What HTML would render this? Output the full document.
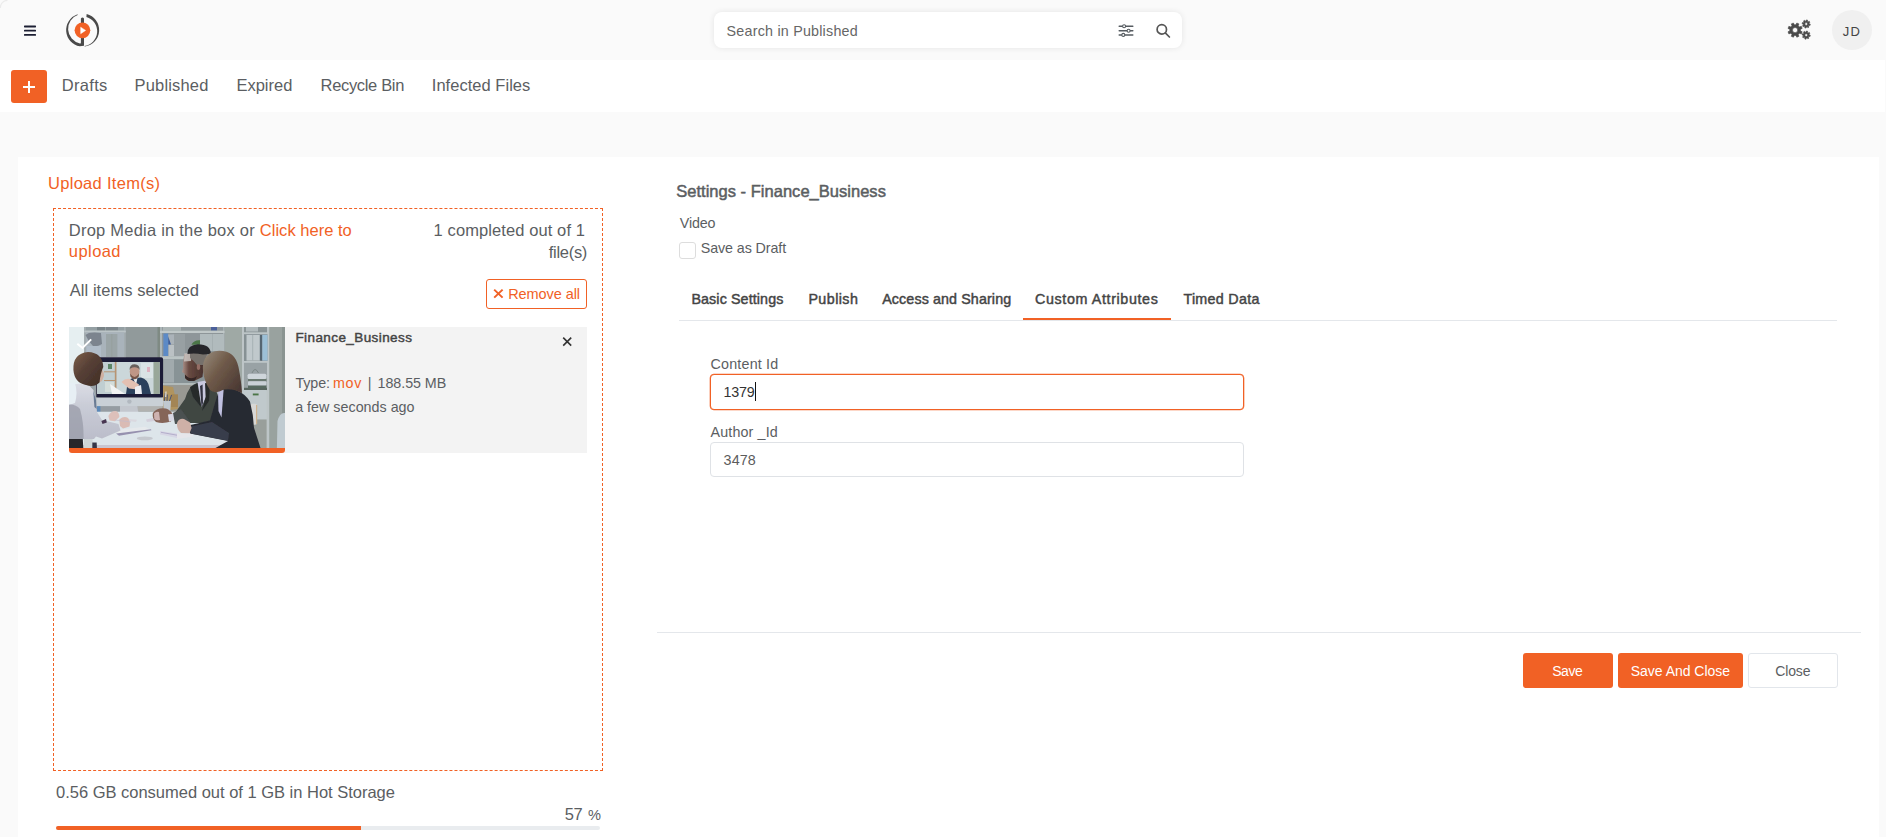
<!DOCTYPE html>
<html lang="en">
<head>
<meta charset="utf-8">
<title>Upload Item(s)</title>
<style>
*{box-sizing:border-box;margin:0;padding:0}
html,body{width:1886px;height:837px;overflow:hidden;background:#fafafa;font-family:"Liberation Sans",sans-serif;color:#555}
.abs{position:absolute;white-space:nowrap}
#nav{position:absolute;left:0;top:60px;width:1885px;height:52px;background:#fff}
#panel{position:absolute;left:18px;top:157px;width:1861px;height:700px;background:#fff}
.t{position:absolute;white-space:nowrap;line-height:1}
.o{color:#f16125}
.tb{font-size:14.5px;font-weight:bold;color:#444}
</style>
</head>
<body>
<div id="nav"></div>
<div id="panel"></div>

<!-- header -->
<svg class="abs" style="left:0;top:0" width="10" height="10" viewBox="0 0 10 10"><path d="M0.3 8 A7.5 7.5 0 0 1 7.5 0.3" fill="none" stroke="#000" stroke-opacity=".06" stroke-width="1.2"/></svg>
<svg class="abs" style="left:24px;top:25px" width="12" height="12" viewBox="0 0 12 12"><g fill="#1c1f33"><rect x="0" y="0.6" width="12" height="1.8" rx=".6"/><rect x="0" y="4.8" width="12" height="1.8" rx=".6"/><rect x="0" y="9" width="12" height="1.8" rx=".6"/></g></svg>

<svg id="logo" class="abs" style="left:62px;top:10px" width="42" height="42" viewBox="0 0 42 42">
<path d="M15.01 4.60 A16.5 16.5 0 0 0 17.78 36.35 L22 35.8 L22 8.4 Q20.45 6.6 18.9 8.4 L18.9 32.6 Q18.9 33.9 17.90 33.47 A14.9 14.9 0 0 1 16.15 4.81 Z" fill="#4a4a4a"/>
<path d="M24.64 4.09 A16.5 16.5 0 0 1 22.95 36.44 L22.37 36.05 A14.9 14.9 0 0 0 24.41 6.98 Z" fill="#4a4a4a"/>
<circle cx="20.45" cy="20.35" r="7.85" fill="#f16125"/>
<path d="M18.7 17.2 L23.6 20.4 L18.7 23.7 Z" fill="#fff" stroke="#fff" stroke-width=".5" stroke-linejoin="round"/>
</svg>

<div class="abs" id="searchbox" style="left:714px;top:12px;width:468px;height:36px;background:#fff;border-radius:8px;box-shadow:0 0 6px rgba(0,0,0,.09)"></div>

<div class="abs" id="avatar" style="left:1832px;top:10px;width:40px;height:40px;border-radius:50%;background:#f0f0f0"></div>

<!-- nav -->
<div class="abs" style="left:11px;top:70px;width:36px;height:33px;background:#f16125;border-radius:3px"></div>
<div class="abs" style="left:23px;top:86px;width:12px;height:2px;background:#fff"></div>
<div class="abs" style="left:28px;top:81px;width:2px;height:12px;background:#fff"></div>

<!-- left panel -->
<div class="abs" id="drop" style="left:53px;top:208px;width:550px;height:563px;border:1px dashed #f16125"></div>
<div class="abs" style="left:486px;top:279px;width:101px;height:30px;border:1px solid #f16125;border-radius:3px"></div>

<div class="abs" style="left:69px;top:327px;width:518px;height:126px;background:#f3f3f3"></div>
<svg class="abs" id="thumb" style="left:69px;top:327px" width="216" height="121" viewBox="0 0 216 121">
<defs>
<filter id="bl" x="-5%" y="-5%" width="110%" height="110%"><feGaussianBlur stdDeviation="0.7"/><feComponentTransfer><feFuncR type="gamma" exponent=".88"/><feFuncG type="gamma" exponent=".88"/><feFuncB type="gamma" exponent=".88"/></feComponentTransfer></filter>
<linearGradient id="hair1" x1="0" x2="1" y1="0" y2="1"><stop offset="0" stop-color="#72543f"/><stop offset=".45" stop-color="#4a342b"/><stop offset="1" stop-color="#33231c"/></linearGradient>
<linearGradient id="hair2" x1="0" x2="1" y1="0" y2=".8"><stop offset="0" stop-color="#8f8272"/><stop offset=".45" stop-color="#65503f"/><stop offset="1" stop-color="#3f2e29"/></linearGradient>
<linearGradient id="face2" x1="0" x2="1" y1="0" y2="0"><stop offset="0" stop-color="#a88a82"/><stop offset=".3" stop-color="#5c3e36"/><stop offset="1" stop-color="#3a2622"/></linearGradient>
<linearGradient id="blouse" x1="0" x2="0" y1="0" y2="1"><stop offset="0" stop-color="#d6d8e1"/><stop offset=".4" stop-color="#c3c6d2"/><stop offset="1" stop-color="#b4b6c4"/></linearGradient>
<clipPath id="tc"><rect width="216" height="121"/></clipPath>
</defs>
<g clip-path="url(#tc)"><g filter="url(#bl)">
<rect x="-3" y="-3" width="222" height="127" fill="#869091"/>
<!-- left strip -->
<rect x="-3" y="-3" width="18.3" height="127" fill="#e3edf0"/>
<!-- shelf unit 1 -->
<rect x="15.3" y="-3" width="41.5" height="95" fill="#9aa4a8"/>
<rect x="17" y="-3" width="38" height="6.5" fill="#8a959a"/>
<rect x="28" y="-3" width="8" height="6.5" fill="#6d787d"/><rect x="37" y="-3" width="12" height="6.5" fill="#717c80"/>
<rect x="15.3" y="3.6" width="41.5" height="1.8" fill="#b4bdc1"/>
<rect x="17" y="5.4" width="38" height="25" fill="#a0abb4"/>
<path d="M16.5 8 Q20 4.5 32 6 L33 17 Q28 20 24 19 Q19 14 16.5 8 Z" fill="#6f7983"/>
<rect x="17.5" y="19" width="14.5" height="11" fill="#a9b5c3"/>
<rect x="37" y="7" width="11.4" height="23" fill="#929c9e"/><rect x="42.5" y="7" width=".7" height="23" fill="#88938f"/>
<rect x="15.3" y="30" width="41.5" height="2" fill="#adb6ba"/>
<rect x="17" y="32" width="38" height="52" fill="#8f999e"/>
<!-- shelf unit 2 -->
<rect x="91" y="-3" width="64.7" height="95" fill="#a3adaf"/><rect x="88.5" y="-3" width="2.5" height="34" fill="#737f78"/>
<rect x="93" y="-3" width="61" height="6.8" fill="#8a9396"/>
<rect x="94" y="-3" width="18" height="6.8" fill="#a5aeae"/><rect x="142" y="-3" width="6" height="6.5" fill="#3f5590"/>
<rect x="91" y="3.8" width="64.7" height="2.2" fill="#b9c2c2"/>
<rect x="93" y="6" width="61" height="23.3" fill="#838c8f"/>
<rect x="94.4" y="6.5" width="5" height="22.5" fill="#4f7fc0"/>
<path d="M99 7.5 L112 7 L107 17.5 L101.5 17.5 Z" fill="#a3abb1"/>
<path d="M99.3 10 L102 17.5 L99.3 17.5 Z" fill="#2f4f96"/>
<rect x="99.5" y="17.9" width="5.5" height="11.2" fill="#b3babd"/>
<rect x="105" y="7" width="11" height="22" fill="#8e979a"/>
<rect x="131" y="7" width="24" height="17" fill="#a9b3b6"/><rect x="143" y="7" width=".7" height="17" fill="#98a2a5"/>
<path d="M122.4 17.7 q2.5 -5 8.6 -4.5 l0 4.5 z" fill="#3f6a3a"/>
<rect x="91" y="29.3" width="64.7" height="3" fill="#b4bdbd"/>
<rect x="93" y="32.3" width="61" height="24" fill="#7e888c"/>
<rect x="94.7" y="32.3" width="10.3" height="23.2" fill="#98a2a5"/>
<rect x="91" y="56" width="64.7" height="2" fill="#a9b2b2"/>
<rect x="93" y="58" width="40" height="30" fill="#8f8f88"/>
<path d="M94 58.5 L104 60 L109 82 L94 84 Z" fill="#a98a52"/>
<!-- wall 2 -->
<rect x="155.7" y="-3" width="17.5" height="127" fill="#96a09c"/>
<!-- right shelf -->
<rect x="173" y="-3" width="27.5" height="127" fill="#b5bfc1"/>
<rect x="175" y="-3" width="23" height="8.3" fill="#7f8a8c"/>
<rect x="177" y="-3" width="12" height="7.5" fill="#aab4b6"/>
<rect x="175" y="7.2" width="23.5" height="26.8" fill="#7b868a"/>
<rect x="177.5" y="8" width="14" height="25.6" fill="#b9c3c6"/><rect x="183.3" y="8" width=".9" height="25.6" fill="#9aa5a8"/>
<rect x="190.8" y="8" width="2.5" height="25.6" fill="#4a5a66"/>
<rect x="193.3" y="7.8" width="5.2" height="25.8" fill="#93b9d3"/>
<rect x="175" y="35.8" width="23" height="25.6" fill="#8f999c"/>
<path d="M183 46 q3 -7 6.5 0" fill="none" stroke="#6f7a7a" stroke-width="1"/>
<rect x="178.6" y="46.7" width="18.8" height="5.3" rx="1.5" fill="#c9d0d6"/><rect x="179" y="52" width="18.4" height="2.3" fill="#5d6d63"/>
<rect x="179" y="54.3" width="18.4" height="4.3" rx="1" fill="#c3cad2"/><rect x="179" y="58.6" width="18.4" height="2.8" fill="#4d5f55"/>
<rect x="175" y="60.8" width="23" height="2.3" fill="#4d5a52"/>
<rect x="174" y="63" width="23.6" height="29" fill="#b9c3c6"/>
<rect x="183.8" y="66.5" width="5.8" height="1.9" fill="#3f6a3a"/>
<rect x="175" y="92.5" width="22.6" height="31.5" fill="#8f9691"/>
<!-- far right -->
<rect x="200.5" y="-3" width="18" height="127" fill="#8f9996"/><rect x="213" y="-3" width="6" height="127" fill="#7f8986"/>

<path d="M207.9 121 L208.5 94 Q211 85 216 86 L219 86 L219 124 L207.9 124 Z" fill="#b9c5cc"/>
<!-- chair behind woman -->
<rect x="181.6" y="76.8" width="6.4" height="21" rx="2" fill="#d3d3d0"/><rect x="187" y="78" width="1.2" height="19" fill="#c9a982"/>
<!-- stuff behind monitor under chin -->
<rect x="27.5" y="79" width="24" height="6" fill="#8b9399"/><rect x="28" y="79" width="3.4" height="6" fill="#4f7eb0"/>
<rect x="68.5" y="79" width="25" height="5.5" fill="#a9aaa8"/>
<!-- monitor -->
<rect x="27.3" y="30.2" width="66.7" height="40.6" rx="1.6" fill="#17132d"/>
<rect x="35" y="35" width="55.7" height="32" fill="#c5d3d6"/>
<rect x="28" y="35" width="20" height="32" fill="#b9c9cc"/>
<rect x="39" y="37" width="4" height="5" fill="#4f7a5a"/><rect x="36" y="55" width="9" height="10" fill="#cfd9d6"/>
<rect x="45.8" y="35" width="1.6" height="32" fill="#b08a66"/><rect x="35" y="44.3" width="12" height="1" fill="#b08a66"/><rect x="35" y="53" width="12" height="1" fill="#b08a66"/>
<rect x="72" y="36" width="12" height="15" fill="#d5dfe2"/><rect x="78" y="40" width="3" height="5" fill="#d9a9b9"/>
<rect x="84.5" y="35" width="6.2" height="32" fill="#8f9f8f"/>
<path d="M57 67 L58.5 56 Q61 50.5 66 51 L72 50.5 Q79 52 80.5 61 L82 67 Z" fill="#22344f"/>
<path d="M64 51 L68.5 50.5 L67 58 Z" fill="#e9ecf0"/>
<ellipse cx="65.6" cy="44.6" rx="4.9" ry="6.6" fill="#b88c7c"/>
<path d="M60.5 43 Q60.5 37.2 65.8 37.3 Q70.8 37.4 70.7 43 L69.5 41.5 Q65.5 39 61.5 41.5 Z" fill="#5b544f"/>
<path d="M61.2 46.5 Q65.5 53.5 70 46.5 L69.8 49.5 Q65.5 55 61.4 49.5 Z" fill="#6a4a3c"/>
<path d="M52.5 55 Q56 51 61 52 L70 57.5 L68.5 62.5 L60 61.5 Z" fill="#e0b9aa"/>
<path d="M41 57 L56 67 L43 67 Z" fill="#f1f2f2"/>
<path d="M66 60 L72 58 L73 67 L66 67 Z" fill="#e9ecf2"/>
<rect x="27.3" y="70.6" width="66.7" height="8.5" fill="#c3cad1"/>
<circle cx="60.4" cy="74.6" r="2.2" fill="#a9b0b8"/>
<path d="M51 79 L68.5 79 L69 84 L71.4 88.4 L50.3 88.4 L51 84 Z" fill="#bcc1c9"/>
<!-- table -->
<path d="M27 84.8 L150 84.8 L166.5 107 L166.5 118 L16 118 Z" fill="#d9e2e7"/>
<path d="M14 118 L166.5 118 L166.5 124 L14 124 Z" fill="#c3bfca"/>
<path d="M150 119 L166.5 118 L167 124 L150 124 Z" fill="#4a3a44"/>
<!-- cup / pencils / wooden -->
<path d="M102 67.3 L109 67.3 L109 80 L102 80 Z" fill="#9a7a4a"/>
<path d="M94 73.8 L102 73.8 L101.3 84 L94.8 84 Z" fill="#b9c2ca"/>
<path d="M95.3 74 L96.3 66 M98 74 L98.3 67.5 M100.5 74 L102.5 68" stroke="#3c4668" stroke-width="1" fill="none"/>
<path d="M96.7 70 L97 64.5" stroke="#e9ecef" stroke-width="1" fill="none"/>
<!-- notebook, mouse, papers -->
<path d="M46.6 103 L76 99.8 L82.4 103 L50 108.5 Z" fill="#e3e6ea"/>
<path d="M47 106.5 L50 108.8 L82.4 103.3 L82 102.2 Z" fill="#8c86a6"/>
<ellipse cx="75.8" cy="111.4" rx="8" ry="1.9" fill="#bfc2c9"/>
<path d="M91 104 L108 106.5 L108 111 L91 107.5 Z" fill="#d3d1e2"/>
<path d="M92 105.3 L108 108.2" stroke="#9a90b8" stroke-width=".7" fill="none"/>
<path d="M77 92.5 L84 91 L86 94 L78 95 Z" fill="#cfcbd8"/>
<path d="M60 92 L68 92.8 L67 95 L60 94 Z" fill="#d6d4dc"/>
<!-- man (black) suit -->
<path d="M106 86 L116 72 Q120 58 128 56 L141 56 Q148 60 149 72 L149 96 L106 96 Z" fill="#343a38"/>
<path d="M121 60 L129 56 L132 80 L124 70 Z" fill="#1c2020"/>
<path d="M128.5 55 L137 53.5 L137 70 L132.5 80 Z" fill="#c3c3dc"/>
<path d="M131 59 L133.6 57.5 L134 76 L132.5 80 Z" fill="#272736"/>
<path d="M136 56 L141 57 L140 74 L133 84 L136.6 70 Z" fill="#1f2222"/>
<!-- man's hands -->
<path d="M83.8 86 Q88 80 97 81.5 Q102 83 104 88 L102 94.5 Q94 97 87 95 Q83 92 83.8 86 Z" fill="#7a584e"/>
<path d="M85 86.5 Q87 84 90 85 L91 93 Q87 94 85.3 92 Z" fill="#c9aaa8"/>
<path d="M99 87.5 L105 86.5 L106.5 93 L100 94.5 Z" fill="#d3d3e0"/>
<path d="M104 86 L112 82 L122 96 L106 97 Z" fill="#3f4444"/>
<!-- man head -->
<path d="M115.4 27 Q113.8 36 114.2 41 L113 45 L115.5 46.5 L116 51 Q119 55.5 126 53.5 L133.5 50 L136 27 Z" fill="url(#face2)"/>
<path d="M115.4 26.5 L122.5 25.8 L122 34 L115 34.5 Z" fill="#c9c4c2" opacity=".8"/>
<path d="M121 26 L138 26 L137 38 L128 38 Q124 33 121 31 Z" fill="#6b6560"/>
<path d="M118.4 27 Q118 18 129 17.2 Q142 17.5 141.8 27 L134 27.5 Q126 26 118.4 27 Z" fill="#1c1c20"/>
<ellipse cx="129.5" cy="40" rx="1.7" ry="3" fill="#8a6258"/>
<path d="M116 47.5 Q121 54 128 49 L126 53.5 Q119 55.5 116 51 Z" fill="#2a1c1a"/>
<!-- woman right: jacket -->
<path d="M150 63.5 Q158 59 166 62.5 Q176 66.5 181 74.6 Q184.5 88 185 100.8 L192.5 124 L141 124 L159 114 L121 106.6 L119.7 102 L121.5 98 L141 93.5 L146 76 Z" fill="#1f2027"/>
<path d="M122 99.5 L143 95 L160 106 L159 113.8 L121.5 106.4 Z" fill="#2f323f"/>
<path d="M149 63.5 L154.6 62.5 L152.5 90.6 L149.5 84 Z" fill="#b9b9dd"/>
<!-- woman right hand -->
<path d="M108 96 Q110 91 115 92 L121 95.5 L122.6 101 L120.5 106.6 L112 106 Q107.5 102 108 96 Z" fill="#c9a89f"/>
<path d="M108 106.6 L121 106.6 L125 109.5 L108 112 Z" fill="#e3e3e8"/>
<!-- woman right: hair -->
<path d="M134 44 Q132.5 25 150 23.7 Q166 23.5 169.5 40 Q172.5 55 173 66 Q164 61 155 62.5 Q146 67.5 141 63 Q135 54 134 44 Z" fill="url(#hair2)"/>
<!-- woman left: chair + skirt -->
<path d="M14.6 124 L15 106 Q18 102 23.3 104 L24 124 Z" fill="#c9d0d3"/>
<path d="M-3 111.7 L13.8 111.7 L14.4 124 L-3 124 Z" fill="#1a1a22"/>
<path d="M23.3 115.4 L27.7 115.4 L28 124 L23.3 124 Z" fill="#2a2a3a"/>
<!-- woman left: blouse -->
<path d="M-3 60 Q8 54.5 20 58.5 L24.4 63 L27 73 L27.8 84.7 L33 93 L49.5 97 L51.5 103.5 L33 111.5 L27 109.5 L25 112 L-3 112 Z" fill="url(#blouse)"/>
<path d="M-3 56 L6 56 Q9 66 6 76 L-3 79 Z" fill="#e4edf3"/>
<path d="M-3 78 Q6 76 11 82 Q15 96 14.5 112 L-3 112 Z" fill="#8f919f" opacity=".75"/>
<path d="M24.2 63.5 L27 73 L27.6 82 L25.4 80 Z" fill="#5f6f8a"/>
<!-- hands left woman -->
<path d="M39.4 89 Q42 83.5 47.5 84.2 Q50.5 86 50.3 90 L46 94.3 L40.5 93.5 Z" fill="#d9b9b2"/>
<path d="M50.3 92.5 Q55 88.5 59 91 Q62 95 60.5 99.5 L54 101.5 L51 99 Z" fill="#d6b3ac"/>
<path d="M32.4 94 L37 92 L37.9 95.5 L33.5 97 Z" fill="#3c2c44"/>
<path d="M46 93 L62 95" stroke="#b9b4c8" stroke-width=".6" fill="none"/>
<!-- woman left head -->
<path d="M30 40.8 Q35 42 35 49 L33 54 L29 56 Z" fill="#c9a898"/>
<path d="M4.4 43 Q3.5 26.5 19 25 Q33.5 25.5 34.3 40 Q31.5 46 30.5 55.5 Q25 61 17 58 Q5.5 56 4.4 43 Z" fill="url(#hair1)"/>
</g>
<path d="M8.3 16.7 L13.5 21 L22.2 12.4" fill="none" stroke="#fff" stroke-width="2"/>
</g>
</svg>
<div class="abs" style="left:69px;top:448px;width:216px;height:5px;background:#f16125;border-radius:0 0 3px 3px"></div>

<div class="abs" style="left:56px;top:826px;width:544px;height:4px;background:#e9ecef;border-radius:2px"></div>
<div class="abs" style="left:56px;top:826px;width:305px;height:4px;background:#f16125;border-radius:2px 0 0 2px"></div>

<!-- right panel -->
<div class="abs" style="left:679px;top:242px;width:17px;height:17px;border:1px solid #ddd;border-radius:3px;background:#fff"></div>

<div class="abs" style="left:679px;top:320px;width:1158px;height:1px;background:#e4e7eb"></div>
<div class="abs" style="left:1023px;top:318px;width:148px;height:2px;background:#f16125"></div>

<div class="abs" style="left:710px;top:374px;width:534px;height:36px;border:1px solid #f16125;border-radius:4px;background:#fff;box-shadow:0 0 0 .3px #f16125"></div>
<div class="abs" style="left:755px;top:382px;width:1px;height:19px;background:#111"></div>
<div class="abs" style="left:710px;top:442px;width:534px;height:35px;border:1px solid #dfe2e6;border-radius:4px;background:#fff"></div>

<div class="abs" style="left:657px;top:632px;width:1204px;height:1px;background:#e4e7eb"></div>
<div class="abs btn" style="left:1523px;top:653px;width:90px;height:35px;background:#f16125;border-radius:3px"></div>
<div class="abs btn" style="left:1618px;top:653px;width:125px;height:35px;background:#f16125;border-radius:3px"></div>
<div class="abs btn" style="left:1748px;top:653px;width:90px;height:35px;background:#fff;border:1px solid #e2e6eb;border-radius:3px"></div>


<svg class="abs" style="left:1786px;top:17px" width="28" height="26" viewBox="0 0 28 26"><g fill="#4a4a4a" fill-rule="evenodd" stroke="#4a4a4a" stroke-width=".6" stroke-linejoin="round"><path d="M14.43 13.94 L16.20 14.80 L15.32 16.91 L13.47 16.27 L12.27 17.47 L12.91 19.32 L10.80 20.20 L9.94 18.43 L8.26 18.43 L7.40 20.20 L5.29 19.32 L5.93 17.47 L4.73 16.27 L2.88 16.91 L2.00 14.80 L3.77 13.94 L3.77 12.26 L2.00 11.40 L2.88 9.29 L4.73 9.93 L5.93 8.73 L5.29 6.88 L7.40 6.00 L8.26 7.77 L9.94 7.77 L10.80 6.00 L12.91 6.88 L12.27 8.73 L13.47 9.93 L15.32 9.29 L16.20 11.40 L14.43 12.26 Z M11.70 13.10 A2.6 2.6 0 1 0 6.50 13.10 A2.6 2.6 0 1 0 11.70 13.10 Z"/><path d="M23.20 6.89 L24.30 7.18 L24.04 8.43 L22.92 8.27 L22.40 9.04 L22.97 10.02 L21.90 10.73 L21.23 9.82 L20.31 10.00 L20.02 11.10 L18.77 10.84 L18.93 9.72 L18.16 9.20 L17.18 9.77 L16.47 8.70 L17.38 8.03 L17.20 7.11 L16.10 6.82 L16.36 5.57 L17.48 5.73 L18.00 4.96 L17.43 3.98 L18.50 3.27 L19.17 4.18 L20.09 4.00 L20.38 2.90 L21.63 3.16 L21.47 4.28 L22.24 4.80 L23.22 4.23 L23.93 5.30 L23.02 5.97 Z M21.60 7.00 A1.4 1.4 0 1 0 18.80 7.00 A1.4 1.4 0 1 0 21.60 7.00 Z"/><path d="M23.20 17.99 L24.30 18.28 L24.04 19.53 L22.92 19.37 L22.40 20.14 L22.97 21.12 L21.90 21.83 L21.23 20.92 L20.31 21.10 L20.02 22.20 L18.77 21.94 L18.93 20.82 L18.16 20.30 L17.18 20.87 L16.47 19.80 L17.38 19.13 L17.20 18.21 L16.10 17.92 L16.36 16.67 L17.48 16.83 L18.00 16.06 L17.43 15.08 L18.50 14.37 L19.17 15.28 L20.09 15.10 L20.38 14.00 L21.63 14.26 L21.47 15.38 L22.24 15.90 L23.22 15.33 L23.93 16.40 L23.02 17.07 Z M21.60 18.10 A1.4 1.4 0 1 0 18.80 18.10 A1.4 1.4 0 1 0 21.60 18.10 Z"/></g></svg>
<svg class="abs" style="left:1116px;top:22px" width="20" height="18" viewBox="0 0 20 18"><g stroke="#555b60" stroke-width="1.5" fill="none" stroke-linecap="round"><path d="M3.2 4.2 H16.8 M3.2 8.7 H16.8 M3.2 12.9 H16.8"/><g fill="#fff" stroke-width="1.1"><circle cx="8.1" cy="4.2" r="1.5"/><circle cx="12.6" cy="8.7" r="1.5"/><circle cx="7.3" cy="12.9" r="1.5"/></g></g></svg>
<svg class="abs" style="left:1154px;top:22px" width="18" height="18" viewBox="0 0 18 18"><g stroke="#555" stroke-width="1.7" fill="none" stroke-linecap="round"><circle cx="7.8" cy="7.4" r="4.7"/><path d="M11.3 10.9 L15.4 15"/></g></svg>
<svg class="abs" style="left:492px;top:287px" width="13" height="13" viewBox="0 0 13 13"><path d="M2.2 2.6 L10.6 10.6 M10.6 2.6 L2.2 10.6" stroke="#f16125" stroke-width="2" fill="none"/></svg>
<svg class="abs" style="left:561px;top:335px" width="13" height="13" viewBox="0 0 13 13"><path d="M2.2 2.6 L10.2 10.6 M10.2 2.6 L2.2 10.6" stroke="#333" stroke-width="1.6" fill="none"/></svg>
<div class="t" id="search" style="left:726.60px;top:23.90px;font-size:14.3px;letter-spacing:0.217px;color:#666">Search in Published</div>
<div class="t" id="jd" style="left:1842.80px;top:24.50px;font-size:13px;letter-spacing:1.300px;color:#444">JD</div>
<div class="t" id="n1" style="left:61.80px;top:76.83px;font-size:16.5px;letter-spacing:0.300px;color:#5b5e62">Drafts</div>
<div class="t" id="n2" style="left:134.60px;top:76.83px;font-size:16.5px;letter-spacing:0.162px;color:#5b5e62">Published</div>
<div class="t" id="n3" style="left:236.40px;top:76.83px;font-size:16.5px;letter-spacing:0.017px;color:#5b5e62">Expired</div>
<div class="t" id="n4" style="left:320.60px;top:76.83px;font-size:16.5px;letter-spacing:-0.340px;color:#5b5e62">Recycle Bin</div>
<div class="t" id="n5" style="left:431.80px;top:76.83px;font-size:16.5px;letter-spacing:0.031px;color:#5b5e62">Infected Files</div>
<div class="t" id="up" style="left:48.00px;top:174.73px;font-size:16.5px;letter-spacing:0.292px;color:#f16125">Upload Item(s)</div>
<div class="t" id="d1" style="left:68.80px;top:221.73px;font-size:16.5px;letter-spacing:0.226px;color:#5b5e62">Drop Media in the box or</div>
<div class="t" id="d2" style="left:259.80px;top:221.73px;font-size:16.5px;letter-spacing:0.025px;color:#f16125">Click here to</div>
<div class="t" id="d3" style="left:68.80px;top:243.43px;font-size:16.5px;letter-spacing:0.440px;color:#f16125">upload</div>
<div class="t" id="c1" style="left:433.60px;top:221.73px;font-size:16.5px;letter-spacing:0.095px;color:#5b5e62">1 completed out of 1</div>
<div class="t" id="c2" style="left:548.80px;top:243.53px;font-size:16.5px;letter-spacing:-0.300px;color:#5b5e62">file(s)</div>
<div class="t" id="all" style="left:69.80px;top:281.93px;font-size:16.5px;letter-spacing:0.041px;color:#5b5e62">All items selected</div>
<div class="t" id="rm" style="left:508.20px;top:286.83px;font-size:14.5px;letter-spacing:-0.078px;color:#f16125">Remove all</div>
<div class="t" id="fb" style="left:295.40px;top:331.47px;font-size:13.5px;letter-spacing:0.413px;color:#444;-webkit-text-stroke:0.45px #444">Finance_Business</div>
<div class="t" id="ty1" style="left:295.40px;top:375.80px;font-size:14.3px;letter-spacing:-0.075px;color:#5b5e62">Type:</div>
<div class="t" id="ty2" style="left:333.00px;top:375.80px;font-size:14.3px;letter-spacing:0.700px;color:#f16125">mov</div>
<div class="t" id="ty3" style="left:367.80px;top:375.80px;font-size:14.3px;letter-spacing:0.000px;color:#5b5e62">|</div>
<div class="t" id="ty4" style="left:377.60px;top:375.80px;font-size:14.3px;letter-spacing:-0.062px;color:#5b5e62">188.55 MB</div>
<div class="t" id="ago" style="left:295.20px;top:399.50px;font-size:14.3px;letter-spacing:0.006px;color:#5b5e62">a few seconds ago</div>
<div class="t" id="st" style="left:56.00px;top:784.33px;font-size:16.5px;letter-spacing:-0.010px;color:#5b5e62">0.56 GB consumed out of 1 GB in Hot Storage</div>
<div class="t" id="pc" style="left:564.80px;top:806.13px;font-size:16.5px;letter-spacing:-0.500px;color:#5b5e62">57</div>
<div class="t" id="pc2" style="left:588.00px;top:807.74px;font-size:14.6px;letter-spacing:0.000px;color:#5b5e62">%</div>
<div class="t" id="set" style="left:676.20px;top:183.13px;font-size:16.5px;letter-spacing:0.023px;color:#5b5e62;-webkit-text-stroke:0.5px #5b5e62">Settings - Finance_Business</div>
<div class="t" id="vid" style="left:679.80px;top:215.60px;font-size:14.3px;letter-spacing:-0.175px;color:#5b5e62">Video</div>
<div class="t" id="sad" style="left:700.80px;top:240.70px;font-size:14.3px;letter-spacing:-0.108px;color:#5b5e62">Save as Draft</div>
<div class="t" id="t1" style="left:691.40px;top:291.70px;font-size:14.3px;letter-spacing:0.108px;color:#444;-webkit-text-stroke:0.45px #444">Basic Settings</div>
<div class="t" id="t2" style="left:808.40px;top:291.70px;font-size:14.3px;letter-spacing:0.433px;color:#444;-webkit-text-stroke:0.45px #444">Publish</div>
<div class="t" id="t3" style="left:882.20px;top:291.70px;font-size:14.3px;letter-spacing:0.106px;color:#444;-webkit-text-stroke:0.45px #444">Access and Sharing</div>
<div class="t" id="t4" style="left:1035.00px;top:291.70px;font-size:14.3px;letter-spacing:0.625px;color:#444;-webkit-text-stroke:0.45px #444">Custom Attributes</div>
<div class="t" id="t5" style="left:1183.40px;top:291.70px;font-size:14.3px;letter-spacing:0.300px;color:#444;-webkit-text-stroke:0.45px #444">Timed Data</div>
<div class="t" id="cid" style="left:710.60px;top:356.60px;font-size:14.3px;letter-spacing:0.178px;color:#5b5e62">Content Id</div>
<div class="t" id="v1" style="left:723.40px;top:384.90px;font-size:14.3px;letter-spacing:-0.167px;color:#333">1379</div>
<div class="t" id="aid" style="left:710.60px;top:424.90px;font-size:14.3px;letter-spacing:0.133px;color:#5b5e62">Author _Id</div>
<div class="t" id="v2" style="left:723.60px;top:452.80px;font-size:14.3px;letter-spacing:0.133px;color:#5c5c5c">3478</div>
<div class="t" id="b1" style="left:1552.20px;top:664.45px;font-size:14px;letter-spacing:-0.467px;color:#fff">Save</div>
<div class="t" id="b2" style="left:1630.80px;top:664.45px;font-size:14px;letter-spacing:-0.031px;color:#fff">Save And Close</div>
<div class="t" id="b3" style="left:1775.20px;top:664.45px;font-size:14px;letter-spacing:-0.125px;color:#5b5e62">Close</div>
</body>
</html>
